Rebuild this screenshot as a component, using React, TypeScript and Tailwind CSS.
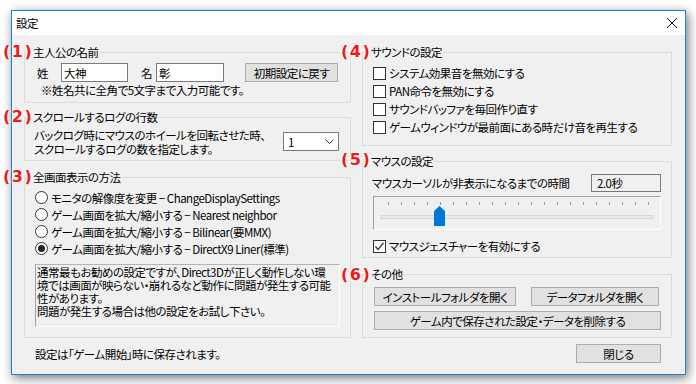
import React from 'react';

const ticks = Array.from({ length: 21 }, (_, i) => i);

function Group({
  title,
  className,
  children,
}: {
  title: string;
  className: string;
  children: React.ReactNode;
}) {
  return (
    <fieldset className={`border border-[#dcdcdc] ${className}`}>
      <legend className="ml-[7px] px-[1px] leading-[16px]">{title}</legend>
      {children}
    </fieldset>
  );
}

function Button({ label, className }: { label: string; className: string }) {
  return (
    <div
      className={`flex h-[19px] items-center justify-center border border-[#adadad] bg-[#e1e1e1] ${className}`}
    >
      {label}
    </div>
  );
}

function Checkbox({ label, checked = false }: { label: string; checked?: boolean }) {
  return (
    <div className="flex h-[18px] items-center gap-[3px]">
      <span className="flex h-[13px] w-[13px] items-center justify-center border border-[#333333] bg-white">
        {checked && (
          <svg width="11" height="11" viewBox="0 0 11 11">
            <polyline points="1.5,5.5 4,8.5 9.5,2" fill="none" stroke="#333333" strokeWidth="1.3" />
          </svg>
        )}
      </span>
      <span>{label}</span>
    </div>
  );
}

function Radio({ label, checked = false }: { label: string; checked?: boolean }) {
  return (
    <div className="flex h-[17px] items-center gap-[3px]">
      <span className="flex h-[13px] w-[13px] items-center justify-center rounded-full border border-[#333333] bg-white">
        {checked && <span className="h-[7px] w-[7px] rounded-full bg-[#222222]" />}
      </span>
      <span>{label}</span>
    </div>
  );
}

// red annotation numbers laid over the dialog
function Tag({ n, className }: { n: string; className: string }) {
  return (
    <span
      className={`absolute font-['DejaVu_Sans',sans-serif] text-[16px] font-bold leading-[20px] tracking-[1.5px] text-[#f01818] [text-shadow:0_0_2px_white,0_0_2px_white,0_0_3px_white] ${className}`}
    >
      ({n})
    </span>
  );
}

export default function App() {
  return (
    <div className="relative h-[384px] w-[696px] overflow-hidden bg-white pl-[11px] pt-[10px] font-['Noto_Sans_CJK_JP',sans-serif] text-[11.5px] leading-[14px] tracking-[-0.5px] text-black [font-feature-settings:'palt']">
      <div className="flex h-[365px] w-[675px] flex-col border border-[#1883d7] bg-[#f0f0f0] shadow-[2px_3px_10px_rgba(0,0,0,0.55)]">
        {/* title bar */}
        <div className="flex h-[24px] items-center justify-between bg-white pl-[4px] pr-[8px]">
          <span>設定</span>
          <svg width="10" height="10" viewBox="0 0 10 10">
            <path d="M0 0L10 10M10 0L0 10" stroke="#111111" strokeWidth="1" />
          </svg>
        </div>

        <div className="flex gap-[11px] pl-[12px] pt-[9px]">
          {/* left column */}
          <div className="flex w-[327px] flex-col">
            <Group title="主人公の名前" className="h-[59px]">
              <div className="mt-[3px] flex h-[19px] items-center pl-[12px]">
                <span>姓</span>
                <div className="ml-[13px] flex h-[19px] w-[67px] items-center border border-[#7a7a7a] bg-white pl-[2px]">
                  大神
                </div>
                <span className="ml-[13px]">名</span>
                <div className="ml-[4px] flex h-[19px] w-[68px] items-center border border-[#7a7a7a] bg-white pl-[2px]">
                  彰
                </div>
                <Button label="初期設定に戻す" className="ml-[21px] w-[93px]" />
              </div>
              <div className="mt-[1px] pl-[16px]">※姓名共に全角で5文字まで入力可能です。</div>
            </Group>

            <Group title="スクロールするログの行数" className="mt-[6px] h-[52px]">
              <div className="flex justify-between pl-[9px] pr-[11px]">
                <div className="whitespace-nowrap pt-[3px]">
                  バックログ時にマウスのホイールを回転させた時、
                  <br />
                  スクロールするログの数を指定します。
                </div>
                <div className="mt-[7px] flex h-[19px] w-[56px] items-center justify-between border border-[#7a7a7a] bg-white pl-[4px] pr-[4px]">
                  <span>1</span>
                  <svg width="9" height="5" viewBox="0 0 9 5">
                    <polyline points="0.5,0.5 4.5,4.5 8.5,0.5" fill="none" stroke="#333333" strokeWidth="1" />
                  </svg>
                </div>
              </div>
            </Group>

            <Group title="全画面表示の方法" className="mt-[8px] h-[169px]">
              <div className="flex flex-col pl-[10px] pt-[4px]">
                <Radio label="モニタの解像度を変更 − ChangeDisplaySettings" />
                <Radio label="ゲーム画面を拡大/縮小する − Nearest neighbor" />
                <Radio label="ゲーム画面を拡大/縮小する − Bilinear(要MMX)" />
                <Radio label="ゲーム画面を拡大/縮小する − DirectX9 Liner(標準)" checked />
              </div>
              <div className="ml-[10px] mt-[7px] h-[63px] w-[305px] overflow-hidden whitespace-nowrap border border-b-white border-l-[#a0a0a0] border-r-white border-t-[#b4b4b4] pl-[1px] pt-[1px] leading-[13px]">
                通常最もお勧めの設定ですが、Direct3Dが正しく動作しない環
                <br />
                境では画面が映らない・崩れるなど動作に問題が発生する可能
                <br />
                性があります。
                <br />
                問題が発生する場合は他の設定をお試し下さい。
              </div>
            </Group>

            <div className="mt-[9px] pl-[11px]">設定は「ゲーム開始」時に保存されます。</div>
          </div>

          {/* right column */}
          <div className="flex w-[310px] flex-col">
            <Group title="サウンドの設定" className="h-[102px]">
              <div className="flex flex-col pl-[10px] pt-[4px]">
                <Checkbox label="システム効果音を無効にする" />
                <Checkbox label="PAN命令を無効にする" />
                <Checkbox label="サウンドバッファを毎回作り直す" />
                <Checkbox label="ゲームウィンドウが最前面にある時だけ音を再生する" />
              </div>
            </Group>

            <Group title="マウスの設定" className="mt-[7px] h-[105px]">
              <div className="flex items-center justify-between pl-[9px] pr-[10px] pt-[5px]">
                <span>マウスカーソルが非表示になるまでの時間</span>
                <div className="flex h-[18px] w-[70px] items-center border border-[#7a7a7a] bg-[#f0f0f0] pl-[5px]">
                  2.0秒
                </div>
              </div>
              <div className="relative ml-[10px] mt-[4px] h-[34px] w-[288px] border border-b-white border-l-[#a0a0a0] border-r-white border-t-[#a0a0a0]">
                <div className="ml-[14px] mt-[5px] flex w-[261px] justify-between">
                  {ticks.map((t) => (
                    <span key={t} className="h-[3px] w-px bg-[#9a9a9a]" />
                  ))}
                </div>
                <div className="mx-[7px] mt-[10px] h-[4px] border border-[#d6d6d6] bg-[#e7eae8]" />
                <svg className="absolute left-[60px] top-[9px]" width="11" height="20" viewBox="0 0 11 20">
                  <polygon points="0,5 5.5,0 11,5 11,20 0,20" fill="#0078d7" />
                </svg>
              </div>
              <div className="mt-[7px] pl-[10px]">
                <Checkbox label="マウスジェスチャーを有効にする" checked />
              </div>
            </Group>

            <Group title="その他" className="mt-[8px] h-[72px]">
              <div className="flex pl-[11px] pt-[5px]">
                <Button label="インストールフォルダを開く" className="w-[142px]" />
                <Button label="データフォルダを開く" className="ml-[15px] w-[128px]" />
              </div>
              <div className="pl-[11px] pt-[5px]">
                <Button label="ゲーム内で保存された設定・データを削除する" className="w-[287px]" />
              </div>
            </Group>

            <Button label="閉じる" className="mr-[11px] mt-[6px] w-[85px] self-end" />
          </div>
        </div>
      </div>

      <Tag n="1" className="left-[3px] top-[42px]" />
      <Tag n="2" className="left-[3px] top-[107px]" />
      <Tag n="3" className="left-[3px] top-[167px]" />
      <Tag n="4" className="left-[341px] top-[42px]" />
      <Tag n="5" className="left-[341px] top-[150px]" />
      <Tag n="6" className="left-[341px] top-[265px]" />
    </div>
  );
}
